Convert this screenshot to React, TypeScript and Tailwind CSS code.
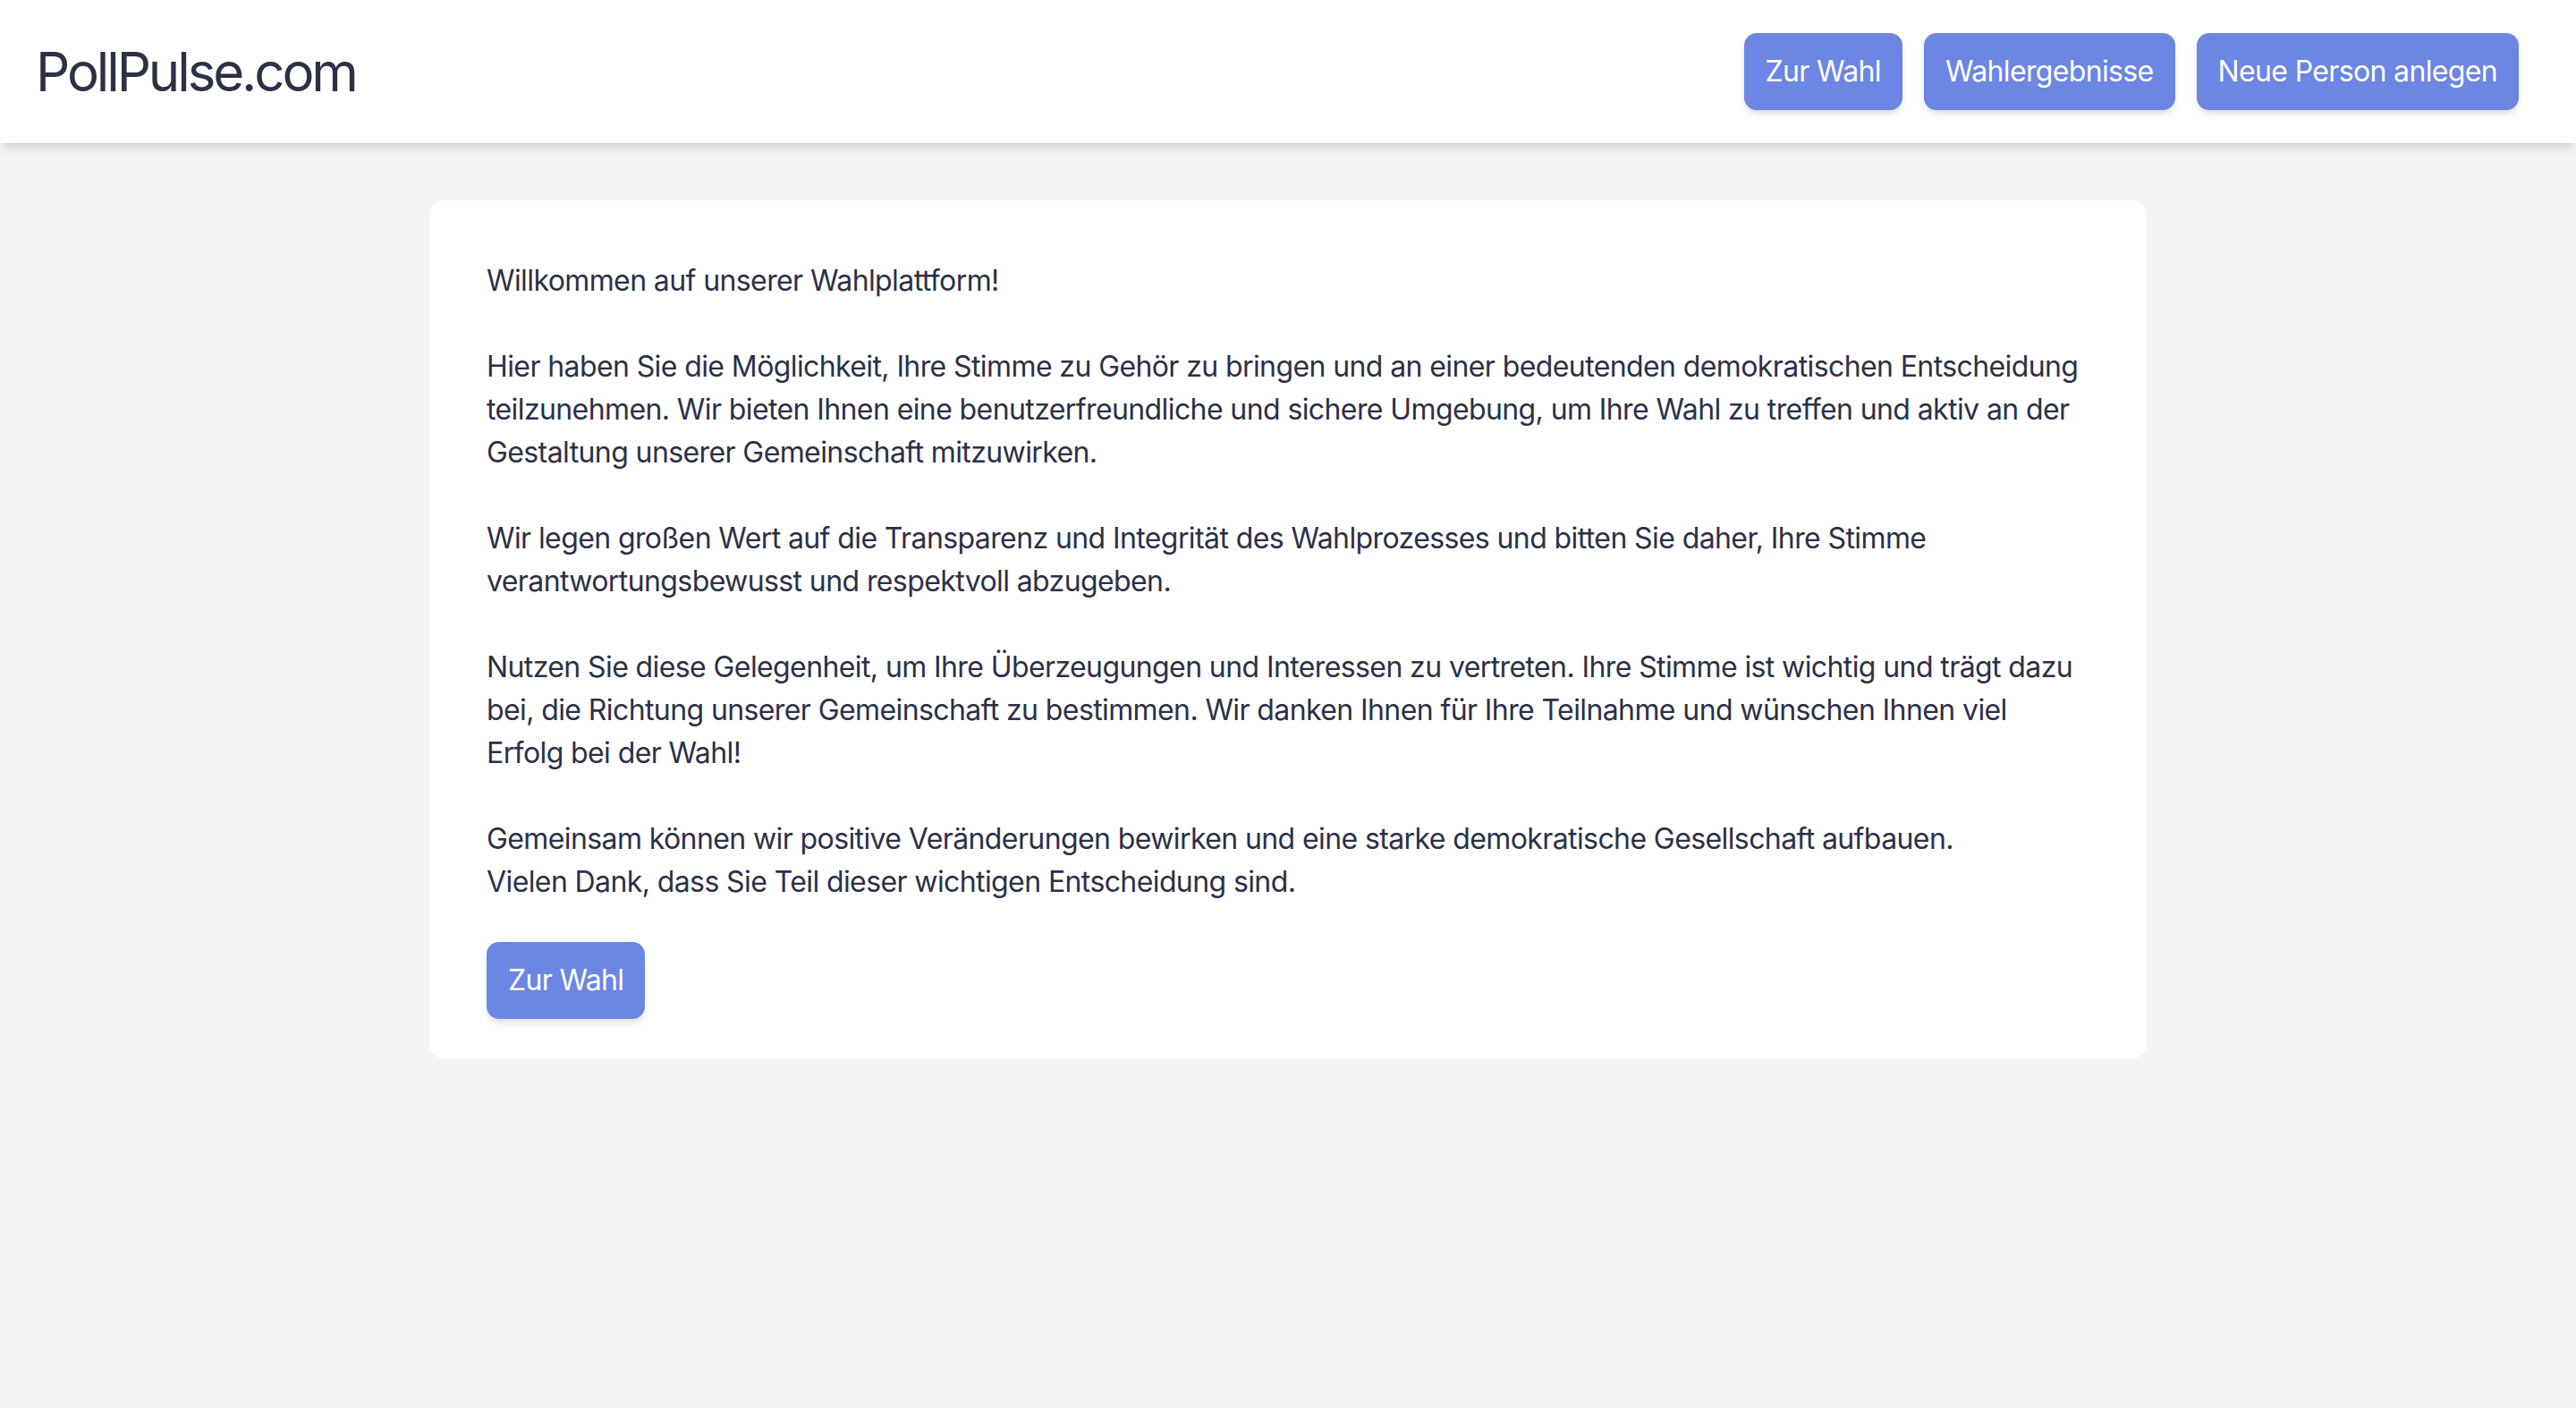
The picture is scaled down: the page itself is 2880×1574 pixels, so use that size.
import React from "react";

const btn =
  "bg-[#6b86e3] text-white text-[32px] leading-[48px] tracking-[-0.65px] px-6 py-[19px] rounded-[14px] shadow-[0_6px_10px_-2px_rgba(0,0,0,0.12),0_3px_6px_-3px_rgba(0,0,0,0.1)] whitespace-nowrap";

export default function App() {
  return (
    <div
      className="min-h-screen bg-[#f3f4f6] text-[#2d3047]"
      style={{ fontFamily: "Inter, 'Noto Sans', sans-serif" }}
    >
      <header className="relative z-10 h-[160px] bg-white flex items-center justify-between pl-[40px] pr-[64px] shadow-[0_8px_12px_-2px_rgba(0,0,0,0.1),0_4px_8px_-4px_rgba(0,0,0,0.1)]">
        <div className="text-[60px] leading-[72px] tracking-[-3.1px]">PollPulse.com</div>
        <nav className="flex gap-6">
          <button className={btn}>Zur Wahl</button>
          <button className={btn}>Wahlergebnisse</button>
          <button className={btn}>Neue Person anlegen</button>
        </nav>
      </header>
      <main className="pt-16 flex justify-center">
        <div className="w-[1920px] bg-white rounded-[16px] pt-[66px] pb-[44px] px-16 text-[32px] leading-[48px] tracking-[-0.6px]">
          <p>Willkommen auf unserer Wahlplattform!</p>
          <p className="mt-12">
            Hier haben Sie die Möglichkeit, Ihre Stimme zu Gehör zu bringen und an einer bedeutenden demokratischen Entscheidung teilzunehmen. Wir bieten Ihnen eine benutzerfreundliche und sichere Umgebung, um Ihre Wahl zu treffen und aktiv an der Gestaltung unserer Gemeinschaft mitzuwirken.
          </p>
          <p className="mt-12">
            Wir legen großen Wert auf die Transparenz und Integrität des Wahlprozesses und bitten Sie daher, Ihre Stimme verantwortungsbewusst und respektvoll abzugeben.
          </p>
          <p className="mt-12">
            Nutzen Sie diese Gelegenheit, um Ihre Überzeugungen und Interessen zu vertreten. Ihre Stimme ist wichtig und trägt dazu bei, die Richtung unserer Gemeinschaft zu bestimmen. Wir danken Ihnen für Ihre Teilnahme und wünschen Ihnen viel Erfolg bei der Wahl!
          </p>
          <p className="mt-12">
            Gemeinsam können wir positive Veränderungen bewirken und eine starke demokratische Gesellschaft aufbauen.
            <br />
            Vielen Dank, dass Sie Teil dieser wichtigen Entscheidung sind.
          </p>
          <div className="mt-[43px]">
            <button className={btn}>Zur Wahl</button>
          </div>
        </div>
      </main>
    </div>
  );
}
